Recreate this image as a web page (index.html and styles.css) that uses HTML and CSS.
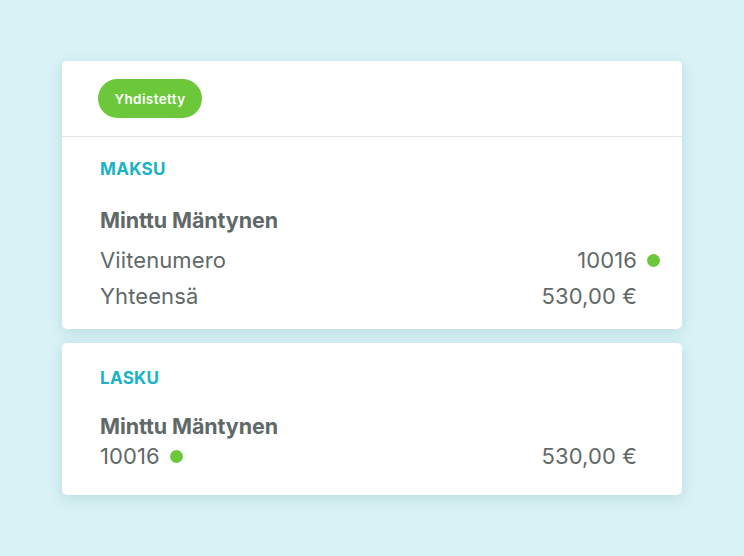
FILE: index.html
```html
<!DOCTYPE html>
<html lang="fi">
<head>
<meta charset="utf-8">
<link rel="stylesheet" href="styles.css">
</head>
<body>
<main class="stack">
  <section class="card">
    <div class="card-head">
      <span class="badge">Yhdistetty</span>
    </div>
    <div class="card-body first">
      <h2 class="label">MAKSU</h2>
      <div class="name">Minttu Mäntynen</div>
      <div class="row">
        <span>Viitenumero</span>
        <span class="val">10016 <i class="dot"></i></span>
      </div>
      <div class="row">
        <span>Yhteensä</span>
        <span class="val">530,00 € <i class="dot hidden"></i></span>
      </div>
    </div>
  </section>
  <section class="card">
    <div class="card-body second">
      <h2 class="label">LASKU</h2>
      <div class="name">Minttu Mäntynen</div>
      <div class="row tight">
        <span class="val">10016 <i class="dot"></i></span>
        <span class="val">530,00 € <i class="dot hidden"></i></span>
      </div>
    </div>
  </section>
</main>
</body>
</html>
```
FILE: styles.css
```css
* { box-sizing: border-box; }
html, body { margin: 0; padding: 0; }
body {
  width: 744px;
  height: 556px;
  background: #d9f2f5;
  font-family: Inter, "Noto Sans", sans-serif;
  color: #5f6968;
}
.stack {
  padding: 61px 62px 0 62px;
  display: flex;
  flex-direction: column;
  gap: 14px;
}
.card {
  background: #fff;
  border-radius: 5px;
  box-shadow: 0 4px 14px rgba(60, 130, 140, 0.18);
}
.card-head {
  height: 76px;
  padding: 18px 36px 0;
  border-bottom: 1px solid #e3e6e6;
}
.badge {
  display: inline-flex;
  align-items: center;
  justify-content: center;
  width: 104px;
  height: 39px;
  border-radius: 20px;
  background: #6cc73a;
  color: #fff;
  font-size: 13.5px;
  font-weight: 600;
  letter-spacing: 0.4px;
}
.card-body {
  padding: 21px 22px 15px 38px;
}
.card-body.second { padding-top: 24px; padding-bottom: 24px; }
.label {
  margin: 0 0 27px;
  font-size: 17px;
  font-weight: 700;
  color: #1ab2c6;
  line-height: 22px;
  letter-spacing: 0.3px;
}
.second .label { margin-bottom: 24px; }
.name {
  font-size: 21.5px;
  font-weight: 700;
  line-height: 26px;
  margin-bottom: 9px;
  letter-spacing: -0.1px;
}
.second .name { margin-bottom: 2px; }
.row {
  display: flex;
  justify-content: space-between;
  align-items: center;
  font-size: 22px;
  line-height: 36px;
  font-weight: 400;
  letter-spacing: 0.1px;
}
.val { display: inline-flex; align-items: center; }
.dot {
  display: inline-block;
  width: 13px;
  height: 13px;
  border-radius: 50%;
  background: #6cc73a;
  margin-left: 10px;
}
.dot.hidden { visibility: hidden; }
.tight { line-height: 30px; }
```
